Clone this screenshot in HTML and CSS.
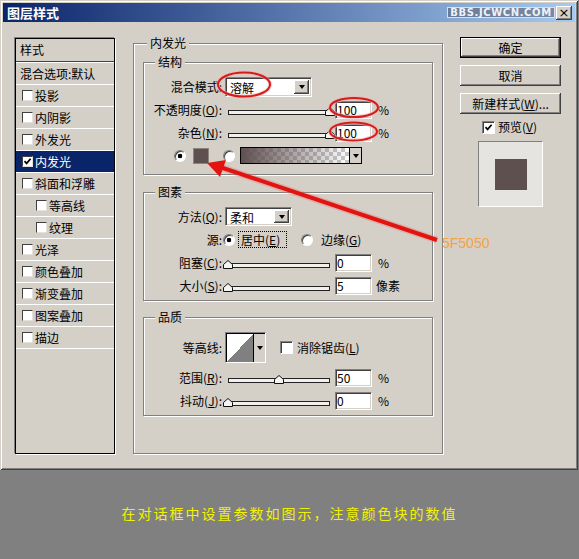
FILE: index.html
```html
<!DOCTYPE html>
<html lang="zh-CN">
<head>
  <meta charset="UTF-8" />
  <title>图层样式</title>
  <link rel="stylesheet" href="styles.css">
</head>
<body>

  <!-- Dialog -->
  <div class="dialog">
    <div class="titlebar">
      <span class="title">图层样式</span>
      <span class="watermark">BBS.JCWCN.COM</span>
      <span class="close">×</span>
    </div>

    <div class="dialog-body">

      <!-- Style list -->
      <div class="style-list">
        <div class="list-head">样式</div>
        <div class="list-item plain">混合选项:默认</div>
        <div class="list-item"><span class="check"></span>投影</div>
        <div class="list-item"><span class="check"></span>内阴影</div>
        <div class="list-item"><span class="check"></span>外发光</div>
        <div class="list-item selected"><span class="check"><svg viewBox="0 0 9 9" width="9" height="9"><path d="M1.5 4.2 L3.6 6.4 L7.6 1.8" /></svg></span>内发光</div>
        <div class="list-item"><span class="check"></span>斜面和浮雕</div>
        <div class="list-item sub"><span class="check"></span>等高线</div>
        <div class="list-item sub"><span class="check"></span>纹理</div>
        <div class="list-item"><span class="check"></span>光泽</div>
        <div class="list-item"><span class="check"></span>颜色叠加</div>
        <div class="list-item"><span class="check"></span>渐变叠加</div>
        <div class="list-item"><span class="check"></span>图案叠加</div>
        <div class="list-item"><span class="check"></span>描边</div>
      </div>

      <!-- Inner glow settings -->
      <fieldset class="group main-group">
        <legend>内发光</legend>

        <fieldset class="group structure">
          <legend>结构</legend>
          <div class="row">
            <label class="lbl">混合模式:</label>
            <div class="combo blend"><span class="combo-text">溶解</span><span class="combo-btn"></span></div>
          </div>
          <div class="row">
            <label class="lbl">不透明度(<u>O</u>):</label>
            <div class="slider"><div class="track"></div><svg class="thumb" style="left:100%" viewBox="0 0 10 9" width="10" height="9"><polygon points="0.5,4.5 5,0.5 9.5,4.5 9.5,8.5 0.5,8.5" /></svg></div>
            <span class="field">100</span>
            <span class="unit">%</span>
          </div>
          <div class="row">
            <label class="lbl">杂色(<u>N</u>):</label>
            <div class="slider"><div class="track"></div><svg class="thumb" style="left:100%" viewBox="0 0 10 9" width="10" height="9"><polygon points="0.5,4.5 5,0.5 9.5,4.5 9.5,8.5 0.5,8.5" /></svg></div>
            <span class="field">100</span>
            <span class="unit">%</span>
          </div>
          <div class="row color-row">
            <span class="radio on"></span>
            <span class="swatch"></span>
            <span class="radio second"></span>
            <div class="grad"><span class="grad-fill"></span><span class="grad-btn"></span></div>
          </div>
        </fieldset>

        <fieldset class="group elements">
          <legend>图素</legend>
          <div class="row">
            <label class="lbl">方法(<u>Q</u>):</label>
            <div class="combo method"><span class="combo-text">柔和</span><span class="combo-btn"></span></div>
          </div>
          <div class="row source-row">
            <label class="lbl">源:</label>
            <span class="radio on"></span>
            <span class="focus">居中(<u>E</u>)</span>
            <span class="radio second"></span>
            <span class="radio-text">边缘(<u>G</u>)</span>
          </div>
          <div class="row">
            <label class="lbl">阻塞(<u>C</u>):</label>
            <div class="slider"><div class="track"></div><svg class="thumb" style="left:0%" viewBox="0 0 10 9" width="10" height="9"><polygon points="0.5,4.5 5,0.5 9.5,4.5 9.5,8.5 0.5,8.5" /></svg></div>
            <span class="field">0</span>
            <span class="unit">%</span>
          </div>
          <div class="row">
            <label class="lbl">大小(<u>S</u>):</label>
            <div class="slider"><div class="track"></div><svg class="thumb" style="left:0%" viewBox="0 0 10 9" width="10" height="9"><polygon points="0.5,4.5 5,0.5 9.5,4.5 9.5,8.5 0.5,8.5" /></svg></div>
            <span class="field">5</span>
            <span class="unit px">像素</span>
          </div>
        </fieldset>

        <fieldset class="group quality">
          <legend>品质</legend>
          <div class="row contour-row">
            <label class="lbl">等高线:</label>
            <div class="contour"><span class="curve"></span><span class="curve-btn"></span></div>
            <span class="check big"></span>
            <span class="check-text">消除锯齿(<u>L</u>)</span>
          </div>
          <div class="row">
            <label class="lbl">范围(<u>R</u>):</label>
            <div class="slider"><div class="track"></div><svg class="thumb" style="left:50%" viewBox="0 0 10 9" width="10" height="9"><polygon points="0.5,4.5 5,0.5 9.5,4.5 9.5,8.5 0.5,8.5" /></svg></div>
            <span class="field">50</span>
            <span class="unit">%</span>
          </div>
          <div class="row">
            <label class="lbl">抖动(<u>J</u>):</label>
            <div class="slider"><div class="track"></div><svg class="thumb" style="left:0%" viewBox="0 0 10 9" width="10" height="9"><polygon points="0.5,4.5 5,0.5 9.5,4.5 9.5,8.5 0.5,8.5" /></svg></div>
            <span class="field">0</span>
            <span class="unit">%</span>
          </div>
        </fieldset>
      </fieldset>

      <!-- Buttons and preview -->
      <div class="side">
        <button class="btn default">确定</button>
        <button class="btn">取消</button>
        <button class="btn">新建样式(<u>W</u>)...</button>
        <div class="preview-row">
          <span class="check big"><svg viewBox="0 0 9 9" width="9" height="9"><path d="M1.5 4.2 L3.6 6.4 L7.6 1.8" /></svg></span>
          <span>预览(<u>V</u>)</span>
        </div>
        <div class="preview"><span class="preview-swatch"></span></div>
      </div>

    </div>
  </div>

  <p class="caption">在对话框中设置参数如图示，注意颜色块的数值</p>

  <!-- Annotations -->
  <svg class="marks" width="579" height="559" viewBox="0 0 579 559">
    <g fill="none">
      <ellipse cx="244" cy="84.5" rx="26" ry="12" stroke="#f6b0b0" stroke-width="4" opacity="0.6" />
      <ellipse cx="244" cy="84.5" rx="26" ry="12" stroke="#d41c1c" stroke-width="2" />
      <ellipse cx="354" cy="107.5" rx="24" ry="9.5" stroke="#f6b0b0" stroke-width="4" opacity="0.6" />
      <ellipse cx="354" cy="107.5" rx="24" ry="9.5" stroke="#d41c1c" stroke-width="2" />
      <ellipse cx="353.5" cy="131.5" rx="23.5" ry="9" stroke="#f6b0b0" stroke-width="4" opacity="0.6" />
      <ellipse cx="353.5" cy="131.5" rx="23.5" ry="9" stroke="#d41c1c" stroke-width="2" />
    </g>
    <line x1="437" y1="240" x2="220" y2="167" stroke="#e87070" stroke-width="7" opacity="0.35" />
    <line x1="437" y1="240" x2="220" y2="167" stroke="#e3140f" stroke-width="4" />
    <polygon points="207,163 226,160 220,177" fill="#e3140f" />
    <text x="442" y="248" class="hex">5F5050</text>
  </svg>

</body>
</html>
```

FILE: styles.css
```css
/* General Styles */
body {
  margin: 0;
  background: #808080;
  font-family: "Noto Sans CJK SC", "Liberation Sans", sans-serif;
  font-size: 12px;
  line-height: 14px;
  color: #000;
}
u {
  text-decoration: underline;
  text-underline-offset: 1px;
}

/* Dialog frame */
.dialog {
  width: 578px;
  height: 470px;
  box-sizing: border-box;
  padding: 3px;
  background: #d4d0c8;
  box-shadow: inset 1px 1px 0 #d4d0c8, inset -1px -1px 0 #404040, inset 2px 2px 0 #fff, inset -2px -2px 0 #808080;
}
.titlebar {
  height: 19px;
  display: flex;
  align-items: center;
  padding-left: 4px;
  background: linear-gradient(to right, #0a246a, #a6caf0);
  color: #fff;
}
.title {
  font-size: 13px;
  font-weight: bold;
}
.watermark {
  margin-left: auto;
  width: 108px;
  height: 11px;
  box-sizing: border-box;
  border: 1px solid #d8e0ee;
  background: rgba(85, 90, 105, 0.55);
  color: #eef2f8;
  font: bold 10px/9px "DejaVu Sans", sans-serif;
  letter-spacing: 0.6px;
  text-align: center;
}
.close {
  width: 16px;
  height: 14px;
  margin: 0 3px 0 1px;
  background: #d4d0c8;
  color: #000;
  font: 13px/13px "DejaVu Sans", sans-serif;
  text-align: center;
  box-shadow: inset -1px -1px 0 #404040, inset 1px 1px 0 #fff, inset -2px -2px 0 #808080;
}
.dialog-body {
  display: flex;
  align-items: flex-start;
  padding: 16px 0 0 12px;
}

/* Style list */
.style-list {
  flex: none;
  width: 100px;
  height: 416px;
  box-sizing: border-box;
  border: 1px solid #000;
  box-shadow: -1px -1px 0 #808080, 1px 1px 0 #fff;
}
.list-head {
  height: 22px;
  line-height: 22px;
  padding-left: 4px;
  border-bottom: 1px solid #404040;
  box-shadow: 0 1px 0 #fff;
  margin-bottom: 1px;
}
.list-item {
  display: flex;
  align-items: center;
  height: 21px;
  padding-left: 6px;
  border-bottom: 1px solid #fff;
}
.list-item.plain {
  padding-left: 4px;
}
.list-item.sub {
  padding-left: 20px;
}
.list-item.selected {
  background: #0a246a;
  color: #fff;
}
.check {
  flex: none;
  width: 11px;
  height: 11px;
  box-sizing: border-box;
  margin-right: 2px;
  background: #fff;
  border: 1px solid;
  border-color: #404040 #e4e1da #e4e1da #404040;
  display: flex;
}
.check svg path {
  fill: none;
  stroke: #000;
  stroke-width: 1.7;
}
.check.big {
  width: 13px;
  height: 13px;
  border-color: #808080 #fff #fff #808080;
  box-shadow: inset 1px 1px 0 #404040;
  padding: 1px 0 0 1px;
}

/* Group boxes */
.group {
  margin: 0;
  padding: 0 8px;
  min-width: 0;
  border: 1px solid #808080;
  box-shadow: inset 1px 1px 0 #fff, 1px 1px 0 #fff;
}
.group legend {
  margin-left: 3px;
  padding: 0 3px;
  line-height: 14px;
  background: #d4d0c8;
}
.main-group {
  flex: none;
  width: 310px;
  height: 418px;
  box-sizing: border-box;
  margin: -2px 0 0 18px;
  padding: 5px 9px 0;
}
.main-group > legend {
  margin-left: 4px;
}
.structure {
  padding: 6px 8px 7px;
}
.elements {
  margin-top: 10px;
  padding: 6px 8px 3px;
}
.quality {
  margin-top: 9px;
  padding: 5px 8px 3px;
}

/* Rows */
.row {
  display: flex;
  align-items: center;
  height: 23px;
}
.lbl {
  flex: none;
  width: 70px;
  margin-right: 3px;
  text-align: right;
  white-space: nowrap;
}
.combo {
  display: flex;
  height: 20px;
  box-sizing: border-box;
  padding: 1px;
  background: #fff;
  border: 1px solid;
  border-color: #808080 #fff #fff #808080;
  box-shadow: inset 1px 1px 0 #404040, inset -1px -1px 0 #d4d0c8;
}
.combo.blend {
  width: 87px;
}
.combo.method {
  width: 67px;
  height: 19px;
}
.combo-text {
  flex: 1;
  padding: 1px 0 0 3px;
  line-height: 15px;
}
.combo-btn {
  width: 15px;
  margin: 1px 1px 1px 0;
  background: #d4d0c8;
  box-shadow: inset -1px -1px 0 #404040, inset 1px 1px 0 #fff, inset -2px -2px 0 #808080;
  display: flex;
  align-items: center;
  justify-content: center;
}
.combo-btn::before,
.grad-btn::before,
.curve-btn::before {
  content: "";
  border-style: solid;
  border-width: 4px 3.5px 0;
  border-color: #000 transparent transparent;
}
.slider {
  position: relative;
  flex: none;
  width: 102px;
  height: 10px;
  margin-left: 3px;
  display: flex;
  align-items: flex-end;
  margin-top: 2px;
}
.track {
  flex: 1;
  height: 5px;
  box-sizing: border-box;
  border: 1px solid #222;
  background: #f2f0ec;
  margin-bottom: 1px;
}
.thumb {
  position: absolute;
  bottom: 0;
  transform: translateX(-50%);
}
.thumb polygon {
  fill: #f4f4f4;
  stroke: #111;
  stroke-width: 1;
}
.field {
  flex: none;
  width: 37px;
  height: 18px;
  box-sizing: border-box;
  margin-left: 5px;
  padding-left: 1px;
  line-height: 16px;
  background: #fff;
  border: 1px solid;
  border-color: #808080 #fff #fff #808080;
  box-shadow: inset 1px 1px 0 #404040, inset -1px -1px 0 #d4d0c8;
}
.unit {
  margin-left: 6px;
}
.unit.px {
  margin-left: 4px;
}

/* Colour choice */
.radio {
  flex: none;
  width: 12px;
  height: 12px;
  box-sizing: border-box;
  border-radius: 50%;
  background: #fff;
  border: 1px solid;
  border-color: #808080 #fff #fff #808080;
  box-shadow: inset 1px 1px 0 #404040;
}
.radio.on {
  background: radial-gradient(circle, #000 0 2px, #fff 2.6px);
}
.color-row {
  padding-left: 22px;
}
.swatch {
  width: 16px;
  height: 16px;
  box-sizing: border-box;
  margin-left: 7px;
  background: #5f5050;
  border: 1px solid #8c8480;
}
.color-row .radio.second {
  margin-left: 14px;
}
.grad {
  display: flex;
  width: 122px;
  height: 17px;
  box-sizing: border-box;
  margin-left: 5px;
  border: 1px solid #000;
}
.grad-fill {
  flex: 1;
  background:
    linear-gradient(to right, #5f5050, rgba(95, 80, 80, 0)),
    repeating-conic-gradient(#c9c9c9 0 25%, #fff 0 50%) 0 0 / 8px 8px;
}
.grad-btn {
  width: 11px;
  background: #d4d0c8;
  border-left: 1px solid #000;
  display: flex;
  align-items: center;
  justify-content: center;
}

/* Source */
.source-row .lbl {
  margin-right: 1px;
}
.focus {
  margin-left: 3px;
  padding: 0 3px 0 2px;
  height: 17px;
  line-height: 16px;
  box-sizing: border-box;
  border: 1px dotted #000;
  width: 49px;
}
.source-row .radio.second {
  margin-left: 14px;
}
.radio-text {
  margin-left: 8px;
}

/* Quality */
.contour-row {
  height: 37px;
}
.contour {
  display: flex;
  width: 41px;
  height: 31px;
  box-sizing: border-box;
  border: 1px solid;
  border-color: #808080 #fff #fff #808080;
  box-shadow: inset 1px 1px 0 #000;
  padding: 1px 0 0 1px;
  background: #fff;
}
.curve {
  flex: 1;
  background: linear-gradient(to top left, #808080 50%, #fff 50%);
}
.curve-btn {
  width: 11px;
  background: #d4d0c8;
  border-left: 1px solid #000;
  display: flex;
  align-items: center;
  justify-content: center;
}
.contour-row .check.big {
  margin-left: 14px;
  margin-right: 4px;
}

/* Side column */
.side {
  flex: none;
  width: 101px;
  margin: -1px 0 0 17px;
  display: flex;
  flex-direction: column;
}
.btn {
  display: block;
  width: 101px;
  height: 21px;
  margin: 0 0 7px;
  padding: 0;
  border: none;
  background: #d4d0c8;
  color: #000;
  font: inherit;
  line-height: 21px;
  box-shadow: inset -1px -1px 0 #404040, inset 1px 1px 0 #fff, inset -2px -2px 0 #808080, inset 2px 2px 0 #d4d0c8;
}
.btn.default {
  box-shadow: inset 0 0 0 1px #000, inset -2px -2px 0 #404040, inset 2px 2px 0 #fff, inset -3px -3px 0 #808080;
}
.preview-row {
  display: flex;
  align-items: center;
  height: 14px;
  margin-top: -1px;
  padding-left: 22px;
}
.preview-row .check.big {
  margin-right: 3px;
}
.preview {
  width: 65px;
  height: 66px;
  box-sizing: border-box;
  margin: 7px 0 0 18px;
  background: #e6e4e0;
  border: 1px solid;
  border-color: #808080 #fff #fff #808080;
  display: flex;
  align-items: center;
  justify-content: center;
}
.preview-swatch {
  width: 32px;
  height: 31px;
  background: #5f5050;
}

/* Caption under the dialog */
.caption {
  margin: 33px 0 0;
  text-align: center;
  color: #f2f200;
  font-size: 14px;
  line-height: 20px;
  letter-spacing: 2px;
}

/* Annotations */
.marks {
  position: absolute;
  top: 0;
  left: 0;
  pointer-events: none;
}
.hex {
  fill: #f3a33f;
  font: 14px "Liberation Sans", sans-serif;
}
```
